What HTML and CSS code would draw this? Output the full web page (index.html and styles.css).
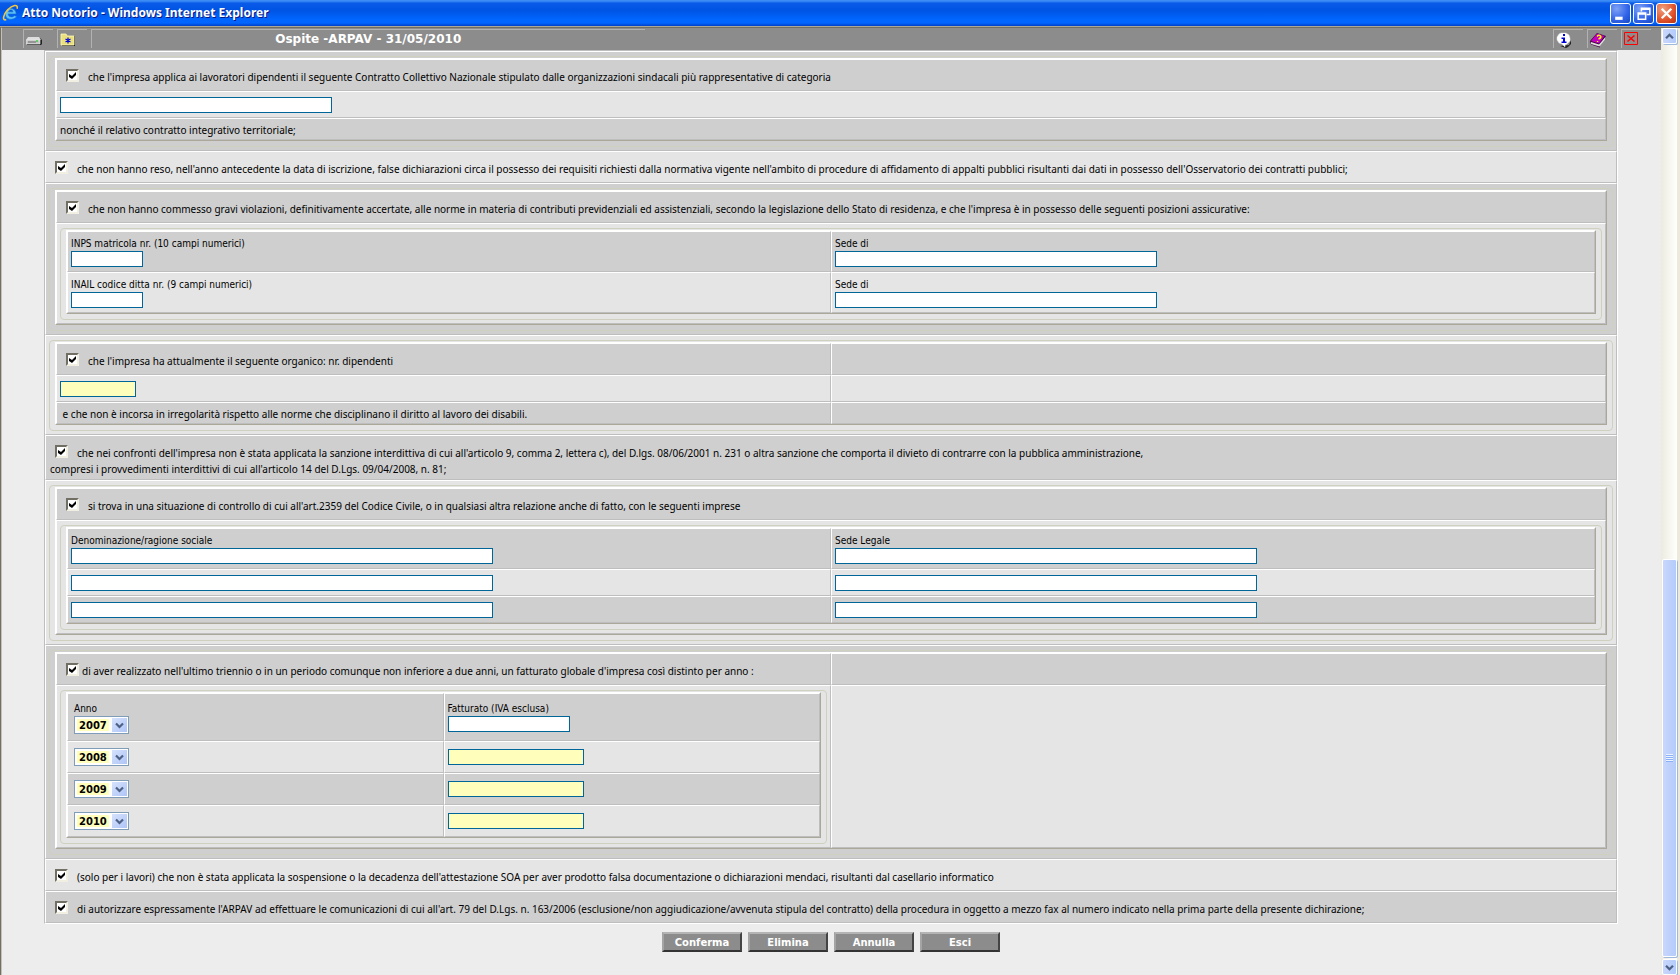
FILE: index.html
```html
<!DOCTYPE html>
<html lang="it">
<head>
<meta charset="utf-8">
<title>Atto Notorio</title>
<link rel="stylesheet" href="styles.css">
</head>
<body>
<header class="titlebar">
  <svg class="app-icon" viewBox="0 0 18 20" aria-hidden="true">
    <path d="M15 11H6.500C6.700 14.500 11 15 13 12.800L15.500 13.800C12 18.500 3 17.500 3.500 10.500 4 4 14.500 3 15 11ZM6.800 8.800H11.700C11.500 6 7.500 6 6.800 8.800Z" fill="#5cc3f8" stroke="#1c70c8" stroke-width=".6"/>
    <path d="M16 5.500C17.500 0 11 1.500 6 6.500 1 12 0 18.500 4.500 17" fill="none" stroke="#f5c63c" stroke-width="1.700"/>
  </svg>
  <h1 class="title">Atto Notorio - Windows Internet Explorer</h1>
  <div class="win-buttons">
    <button class="win-btn" aria-label="Riduci a icona"><svg viewBox="0 0 16 16"><path d="M3 11h7v3H3z" fill="#fff"/></svg></button>
    <button class="win-btn" aria-label="Ripristina"><svg viewBox="0 0 16 16"><path d="M6 6V3h8v6h-3M6 4h8M3 7.500h7v6H3zM3 8.500h7" fill="none" stroke="#fff" stroke-width="1.400"/></svg></button>
    <button class="win-btn win-close" aria-label="Chiudi"><svg viewBox="0 0 16 16"><path d="M3.500 3.500l9 9M12.500 3.500l-9 9" stroke="#fff" stroke-width="2.200"/></svg></button>
  </div>
</header>
<div class="window">
  <div class="page">
    <nav class="toolbar">
      <button class="tool" aria-label="Unità"><svg width="16" height="16" viewBox="0 0 16 16"><path d="M2 6h12l2 2v4l-1 1H1z" fill="#222"/><path d="M2 5h11l2 3H0z" fill="#ddd"/><path d="M0 8h14v4H0z" fill="#c4c4c4" stroke="#eee" stroke-width=".6"/><path d="M10 8.500h2v1h-2z" fill="#0c0"/><path d="M2 10h8" stroke="#666"/></svg></button>
      <button class="tool" aria-label="Preferiti"><svg width="16" height="16" viewBox="0 0 16 16"><path d="M2 4h13v10H2z" fill="#222"/><path d="M1 2h5l1 2h7v9H1z" fill="#e9e07a" stroke="#fff9b8" stroke-width=".8"/><path d="M8 5.500v6M5.500 7l5 3M10.500 7l-5 3" stroke="#00d" stroke-width="1.200"/></svg></button>
      <div class="session">Ospite -ARPAV - 31/05/2010</div>
      <div class="tools-right">
        <button class="tool" aria-label="Informazioni"><svg width="16" height="16" viewBox="0 0 16 16"><path d="M4 14l9-1 2-5v4l-3 3-2 1z" fill="#222"/><path d="M5 1h5l3 2 1 3v3l-3 3-2 1v2l-3-3-3-1-2-3V5l2-3z" fill="#fff" stroke="#ddd" stroke-width=".5"/><path d="M7 2h2v2H7zM5.500 5.500H9v4h1.500V11h-5V9.500H7V7H5.500z" fill="#00d"/></svg></button>
        <button class="tool" aria-label="Guida"><svg width="18" height="16" viewBox="0 0 18 16"><path d="M0 9l7-8 9 3-6 9v2.500L1 12.500z" fill="#400040"/><path d="M1 9l6-7.500L14.500 4 9 11.500z" fill="#c000c0"/><path d="M1 10l8 2.500 6-7v2l-5.500 7L1 12z" fill="#ddd"/><path d="M7 4.500q2-2 3.500-.5t-2 3M7.500 9v1" fill="none" stroke="#ff0" stroke-width="1.400"/></svg></button>
        <button class="tool" aria-label="Esci"><svg width="16" height="16" viewBox="0 0 16 16"><path d="M.5 .5h13v12h-13z" fill="none" stroke="#f00"/><path d="M3.500 3.500l7 6M10.500 3.500l-7 6" stroke="#f00" stroke-width="1.600"/></svg></button>
      </div>
    </nav>
    <form class="form">
      <div class="sections">
        <section class="cell dark group">
          <fieldset><div class="frame">
            <div class="cell dark text"><label><input type="checkbox" checked>che l'impresa applica ai lavoratori dipendenti il seguente Contratto Collettivo Nazionale stipulato dalle organizzazioni sindacali più rappresentative di categoria</label></div>
            <div class="cell light entry"><input type="text" class="field w-contract" aria-label="Contratto Collettivo Nazionale"></div>
            <div class="cell dark note">nonché il relativo contratto integrativo territoriale;</div>
          </div></fieldset>
        </section>
        <section class="cell light text outer"><label><input type="checkbox" checked>che non hanno reso, nell'anno antecedente la data di iscrizione, false dichiarazioni circa il possesso dei requisiti richiesti dalla normativa vigente nell'ambito di procedure di affidamento di appalti pubblici risultanti dai dati in possesso dell'Osservatorio dei contratti pubblici;</label></section>
        <section class="cell dark group">
          <fieldset><div class="frame">
            <div class="cell dark text"><label><input type="checkbox" checked>che non hanno commesso gravi violazioni, definitivamente accertate, alle norme in materia di contributi previdenziali ed assistenziali, secondo la legislazione dello Stato di residenza, e che l'impresa è in possesso delle seguenti posizioni assicurative:</label></div>
            <div class="cell light group">
              <fieldset><div class="frame two">
                <div class="cell dark labelled"><label for="inps">INPS matricola nr. (10 campi numerici)</label><input type="text" class="field w-code" id="inps"></div>
                <div class="cell dark labelled"><label for="inps-sede">Sede di</label><input type="text" class="field w-sede" id="inps-sede"></div>
                <div class="cell light labelled"><label for="inail">INAIL codice ditta nr. (9 campi numerici)</label><input type="text" class="field w-code" id="inail"></div>
                <div class="cell light labelled"><label for="inail-sede">Sede di</label><input type="text" class="field w-sede" id="inail-sede"></div>
              </div></fieldset>
            </div>
          </div></fieldset>
        </section>
        <section class="cell light group">
          <fieldset><div class="frame two">
            <div class="cell dark text"><label><input type="checkbox" checked>che l'impresa ha attualmente il seguente organico: nr. dipendenti</label></div>
            <div class="cell dark"></div>
            <div class="cell light entry"><input type="text" class="field required w-staff" aria-label="Numero dipendenti"></div>
            <div class="cell light"></div>
            <div class="cell dark note">&nbsp;e che non è incorsa in irregolarità rispetto alle norme che disciplinano il diritto al lavoro dei disabili.</div>
            <div class="cell dark"></div>
          </div></fieldset>
        </section>
        <section class="cell dark text outer multi"><label><input type="checkbox" checked>che nei confronti dell'impresa non è stata applicata la sanzione interdittiva di cui all'articolo 9, comma 2, lettera c), del D.lgs. 08/06/2001 n. 231 o altra sanzione che comporta il divieto di contrarre con la pubblica amministrazione,<br>compresi i provvedimenti interdittivi di cui all'articolo 14 del D.Lgs. 09/04/2008, n. 81;</label></section>
        <section class="cell light group">
          <fieldset><div class="frame">
            <div class="cell dark text"><label><input type="checkbox" checked>si trova in una situazione di controllo di cui all'art.2359 del Codice Civile, o in qualsiasi altra relazione anche di fatto, con le seguenti imprese</label></div>
            <div class="cell light group">
              <fieldset><div class="frame two">
                <div class="cell dark labelled"><label for="den1">Denominazione/ragione sociale</label><input type="text" class="field w-company" id="den1"></div>
                <div class="cell dark labelled"><label for="sede1">Sede Legale</label><input type="text" class="field w-company" id="sede1"></div>
                <div class="cell light entry"><input type="text" class="field w-company" aria-label="Denominazione 2"></div>
                <div class="cell light entry"><input type="text" class="field w-company" aria-label="Sede Legale 2"></div>
                <div class="cell dark entry"><input type="text" class="field w-company" aria-label="Denominazione 3"></div>
                <div class="cell dark entry"><input type="text" class="field w-company" aria-label="Sede Legale 3"></div>
              </div></fieldset>
            </div>
          </div></fieldset>
        </section>
        <section class="cell dark group">
          <fieldset><div class="frame two">
            <div class="cell dark text tight"><label><input type="checkbox" checked>di aver realizzato nell'ultimo triennio o in un periodo comunque non inferiore a due anni, un fatturato globale d'impresa così distinto per anno :</label></div>
            <div class="cell dark"></div>
            <div class="cell light group">
              <fieldset><div class="frame two">
                <div class="cell dark year first"><label for="y1">Anno</label><select id="y1" class="select"><option>2007</option></select></div>
                <div class="cell dark amount first"><label for="f1">Fatturato (IVA esclusa)</label><input type="text" class="field w-amount-short" id="f1"></div>
                <div class="cell light year"><select class="select" aria-label="Anno 2"><option>2008</option></select></div>
                <div class="cell light amount"><input type="text" class="field required w-amount" aria-label="Fatturato 2"></div>
                <div class="cell dark year"><select class="select" aria-label="Anno 3"><option>2009</option></select></div>
                <div class="cell dark amount"><input type="text" class="field required w-amount" aria-label="Fatturato 3"></div>
                <div class="cell light year"><select class="select" aria-label="Anno 4"><option>2010</option></select></div>
                <div class="cell light amount"><input type="text" class="field required w-amount" aria-label="Fatturato 4"></div>
              </div></fieldset>
            </div>
            <div class="cell light"></div>
          </div></fieldset>
        </section>
        <section class="cell light text outer"><label><input type="checkbox" checked>(solo per i lavori) che non è stata applicata la sospensione o la decadenza dell'attestazione SOA per aver prodotto falsa documentazione o dichiarazioni mendaci, risultanti dal casellario informatico</label></section>
        <section class="cell dark text outer"><label><input type="checkbox" checked>di autorizzare espressamente l'ARPAV ad effettuare le comunicazioni di cui all'art. 79 del D.Lgs. n. 163/2006 (esclusione/non aggiudicazione/avvenuta stipula del contratto) della procedura in oggetto a mezzo fax al numero indicato nella prima parte della presente dichirazione;</label></section>
      </div>
      <div class="actions">
        <button type="button" class="action">Conferma</button>
        <button type="button" class="action">Elimina</button>
        <button type="button" class="action">Annulla</button>
        <button type="button" class="action">Esci</button>
      </div>
    </form>
  </div>
  <div class="scrollbar">
    <button class="scroll-btn" aria-label="Scorri su"><svg viewBox="0 0 15 15"><path d="M3.500 9.500l4-4 4 4" fill="none" stroke="#4d6185" stroke-width="2.600"/></svg></button>
    <div class="track-above"></div>
    <div class="thumb"><span class="grip"></span></div>
    <button class="scroll-btn" aria-label="Scorri giù"><svg viewBox="0 0 15 15"><path d="M3.500 5.500l4 4 4-4" fill="none" stroke="#4d6185" stroke-width="2.600"/></svg></button>
  </div>
</div>
</body>
</html>
```
FILE: styles.css
```css
* { box-sizing: border-box; }

body {
  margin: 0;
  height: 100vh;
  display: flex;
  flex-direction: column;
  overflow: hidden;
  background: #ededed;
  color: #000;
  font: 10px/15px "Noto Sans", "Open Sans", sans-serif;
}

button { padding: 0; border: 0; background: none; display: block; }

/* Window title bar */
.titlebar {
  flex: none;
  height: 26px;
  display: flex;
  align-items: center;
  padding: 0 3px 0 2px;
  gap: 3px;
  background: linear-gradient(#3c8cf5 0, #3c8cf5 4%, #0a5ae8 12%, #0054e3 40%, #0066ff 75%, #0066ff 88%, #0040c8 100%);
}
.app-icon { width: 17px; height: 20px; }
.title {
  flex: 1;
  margin: 0;
  color: #fff;
  font: bold 12px/20px "Noto Sans", "Open Sans", sans-serif;
  text-shadow: 1px 1px 0 #0a1883;
}
.win-buttons { display: flex; gap: 2px; }
.win-btn {
  width: 21px;
  height: 21px;
  padding: 1px;
  border: 1px solid #fff;
  border-radius: 3px;
  background: radial-gradient(circle at 30% 25%, #7ea2f5, #2f62e8 60%, #1848c0);
}
.win-close { background: radial-gradient(circle at 30% 25%, #f0a080, #e0512a 60%, #b83210); }
.win-btn svg { display: block; }

.window {
  flex: 1;
  min-height: 0;
  display: flex;
  margin-top: 1px;
  border-top: 1px solid #716f64;
  border-left: 2px groove #c5c2b4;
  box-shadow: 0 -1px 0 #aca899;
}
.page { flex: 1; min-width: 0; }

/* Toolbar */
.toolbar {
  height: 22px;
  display: flex;
  gap: 4px;
  padding: 1px 10px 0 21px;
  background: #8c8c8c;
}
.tool, .session {
  height: 19px;
  border: solid #b2b2b2;
  border-width: 1px 0 0 1px;
}
.tool { width: 30px; padding: 2px 0 0 2px; }
.tool svg { display: block; }
.session {
  width: 34%;
  color: #fff;
  font: bold 12px/19px "DejaVu Sans", Verdana, sans-serif;
  text-align: center;
}
.tools-right { margin-left: auto; display: flex; gap: 4px; }

/* Bevelled cell grid */
.sections {
  margin: 0 43px 0 42px;
  border: 1px solid #bebebe;
  border-right-color: #fff;
  border-bottom-color: #fff;
}
.cell {
  border: 1px solid #fff;
  border-right-color: #bebebe;
  border-bottom-color: #bebebe;
  min-width: 0;
}
.dark { background: #cfcfcf; }
.light { background: #e5e5e5; }
.frame {
  border: 1px solid #fff;
  border-right-color: #aca899;
  border-bottom-color: #aca899;
}
.two { display: grid; grid-template-columns: 1fr 1fr; }
.group { padding: 4px 3px 3px; }
fieldset {
  margin: 0;
  min-width: 0;
  padding: 1px 5px 5px;
  border: 1px solid #d0d0bf;
  border-radius: 4px;
}

.text { padding: 9px 3px 4px; line-height: 17px; }
.outer { padding-left: 4px; }
.multi { padding-bottom: 2px; line-height: 16px; }
.note { padding: 4px 3px 1px; }
.entry { padding: 5px 3px 4px; }
.labelled { padding: 4px 3px; }
.amount { padding: 7px 3px; }
.year { padding: 6px; }
.first { padding-top: 7px; }

.labelled label, .first label {
  display: block;
  font: 10px/15px "DejaVu Sans Condensed", Tahoma, sans-serif;
}

/* Controls */
input[type="checkbox"] {
  appearance: none;
  width: 13px;
  height: 13px;
  margin: 0 9px 0 6px;
  vertical-align: top;
  border: 2px solid;
  border-color: #716f64 #f1efe2 #f1efe2 #716f64;
  background: #fff;
}
.outer input[type="checkbox"] { margin-left: 5px; }
.tight input[type="checkbox"] { margin-right: 3px; }
input[type="checkbox"]:checked::before {
  content: "";
  display: block;
  width: 7px;
  height: 7px;
  margin: 1px;
  background: #000;
  clip-path: polygon(0 29%, 43% 57%, 100% 0, 100% 43%, 43% 100%, 0 71%);
}
.field {
  display: block;
  height: 16px;
  padding: 0 2px;
  border: 1px solid #069;
  border-radius: 0;
  background: #fff;
  font: inherit;
}
.required { background: #ffffbb; }
.w-contract { width: 272px; }
.w-code { width: 72px; }
.w-sede { width: 322px; }
.w-staff { width: 76px; }
.w-company { width: 422px; }
.w-amount-short { width: 122px; }
.w-amount { width: 136px; }

.select {
  appearance: none;
  display: block;
  width: 55px;
  height: 18px;
  padding: 1px 0 0 4px;
  border: 1px solid #7f9db9;
  border-radius: 0;
  background:
    url("data:image/svg+xml,%3Csvg xmlns='http://www.w3.org/2000/svg' width='9' height='7'%3E%3Cpath d='M1 1.500l3.500 3.500L8 1.500' fill='none' stroke='%234d6185' stroke-width='2.200'/%3E%3C/svg%3E") 40px 5px no-repeat,
    linear-gradient(135deg, #d6e2fd, #aec5f7) 37px 1px / 15px 14px no-repeat,
    linear-gradient(#ffffbb, #ffffbb) 2px 2px / 32px 12px no-repeat,
    #fff;
  color: #000;
  font: bold 10px/16px "DejaVu Sans", Verdana, sans-serif;
}

.actions { display: flex; justify-content: center; gap: 6px; padding: 8px 1px 8px 0; }
.action {
  width: 80px;
  height: 20px;
  padding-top: 1px;
  border: 2px solid;
  border-color: #b4b4b4 #444 #333 #a4a4a4;
  background: #8c8c8c;
  color: #fff;
  font: bold 10px/16px "DejaVu Sans", Verdana, sans-serif;
}

/* Scroll bar */
.scrollbar {
  flex: none;
  width: 19px;
  display: flex;
  flex-direction: column;
  padding: 0 3px 0 1px;
  background: linear-gradient(90deg, #edebe0, #fefefb 80%, #fefefb 84%, #eee9dd 85%);
}
.scroll-btn, .thumb {
  border: 1px solid #fff;
  border-radius: 2px;
  background: linear-gradient(90deg, #c9d7fc, #b4cbfa);
  box-shadow: 1px 1px 0 #9fb9dc;
}
.scroll-btn { flex: none; height: 16px; }
.scroll-btn svg { display: block; }
.track-above { flex: 517 0 0; }
.thumb { flex: 398 0 0; margin-bottom: 2px; display: grid; place-items: center; }
.grip { width: 7px; height: 8px; background: repeating-linear-gradient(#eef4fe 0 1px, #8cb0f8 1px 2px); }
```
